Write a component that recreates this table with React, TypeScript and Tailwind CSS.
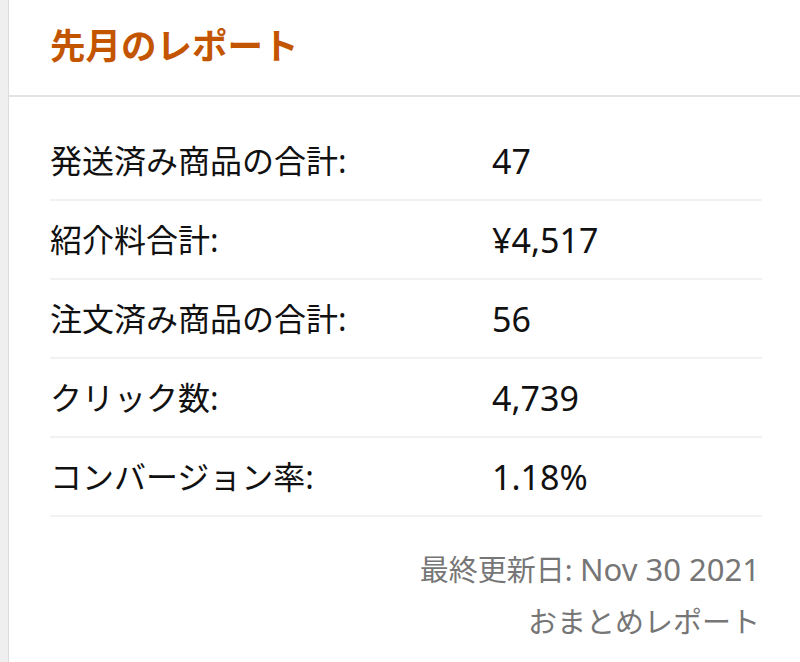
import React from 'react';

interface ReportRow {
  label: string;
  value: string;
}

const rows: ReportRow[] = [
  { label: '発送済み商品の合計:', value: '47' },
  { label: '紹介料合計:', value: '¥4,517' },
  { label: '注文済み商品の合計:', value: '56' },
  { label: 'クリック数:', value: '4,739' },
  { label: 'コンバージョン率:', value: '1.18%' },
];

const App: React.FC = () => {
  return (
    <div
      className="flex w-[800px] h-[662px] overflow-hidden bg-white"
      style={{ fontFamily: '"Noto Sans", "Noto Sans CJK JP", sans-serif' }}
    >
      {/* page gutter */}
      <div className="w-[9px] shrink-0 bg-[#efefef] border-r border-[#dcdcdc]"></div>

      <div className="flex-1 flex flex-col">
        <div className="h-[97px] px-[41px] pb-[4px] flex items-center border-b-2 border-[#e3e3e3]">
          <h2 className="text-[35.5px] font-bold text-[#c45500] leading-none">先月のレポート</h2>
        </div>

        <div className="pl-[41px] pr-[38px] pt-[25px]">
          {rows.map(r => (
            <div key={r.label} className="h-[79px] flex items-center border-b-2 border-[#f2f2f2]">
              <span className="w-[442px] shrink-0 text-[32px] text-[#111111] leading-none">{r.label}</span>
              <span className="text-[34px] text-[#111111] leading-none">{r.value}</span>
            </div>
          ))}
        </div>

        <div className="pr-[40px] pt-[37px] flex flex-col items-end gap-[22px] text-[29px] text-[#767676] leading-none">
          <p>最終更新日: <span className="text-[31px]">Nov 30 2021</span></p>
          <p>おまとめレポート</p>
        </div>
      </div>
    </div>
  );
};

export default App;
